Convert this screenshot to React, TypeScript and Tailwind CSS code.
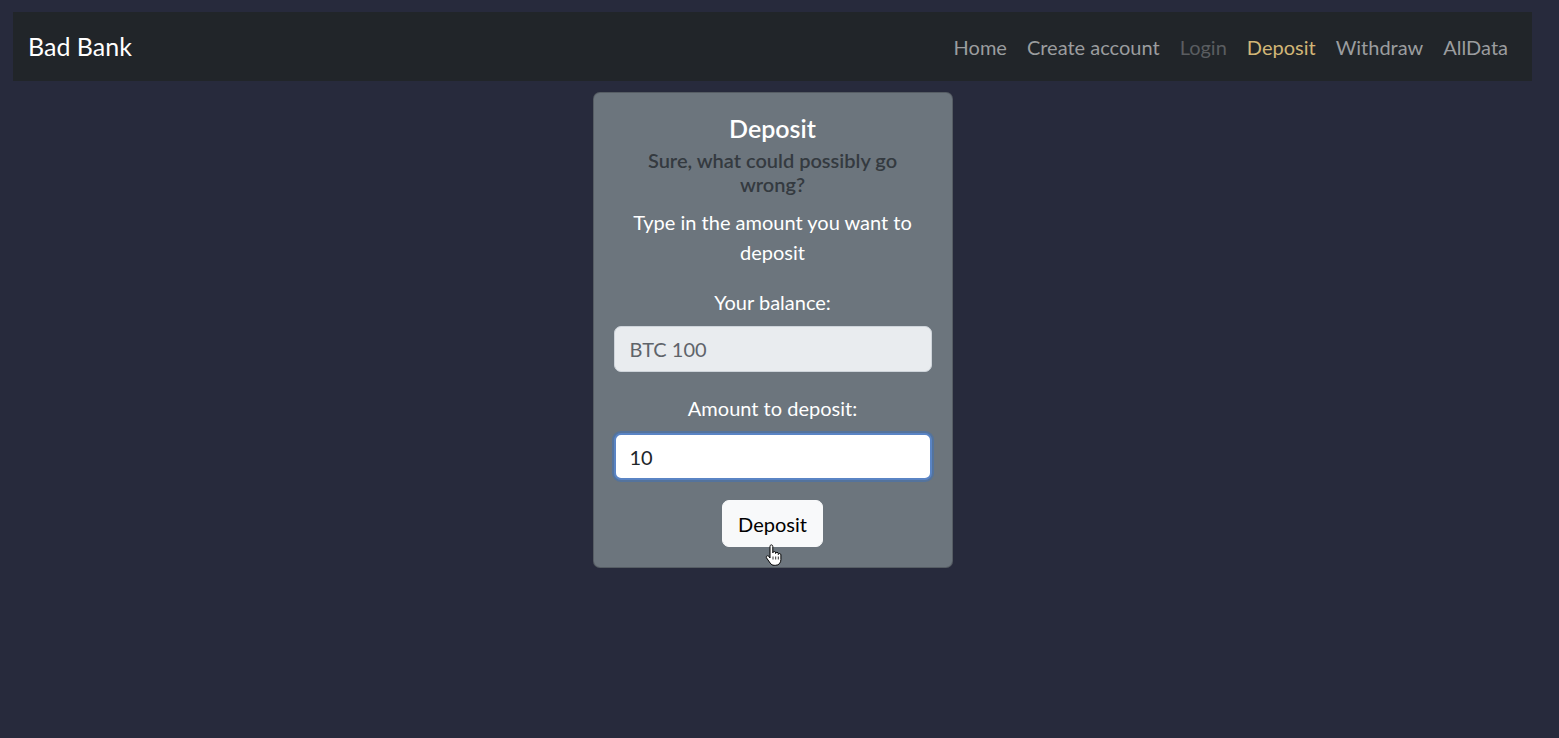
const links = [
  { label: "Home", className: "text-[#9b9d9f]" },
  { label: "Create account", className: "text-[#9b9d9f]" },
  { label: "Login", className: "text-[#5a5d60]" },
  { label: "Deposit", className: "text-[#d2b677]" },
  { label: "Withdraw", className: "text-[#9b9d9f]" },
  { label: "AllData", className: "text-[#9b9d9f]" },
];

function HandCursor() {
  return (
    <svg
      width="18"
      height="22"
      viewBox="0 0 18 22"
      className="pointer-events-none absolute left-[765px] top-[544px]"
    >
      <path
        d="M5 2.5c0-1 .6-1.6 1.4-1.6s1.4.6 1.4 1.6v6.3c.2-.9.8-1.3 1.5-1.3.8 0 1.3.6 1.3 1.4v.6c.2-.8.8-1.2 1.4-1.2.8 0 1.3.6 1.3 1.4v.8c.2-.7.7-1 1.3-1 .8 0 1.3.6 1.3 1.4v4.6c0 3.2-2 5.8-5.3 5.8H9.2c-1.8 0-3-.8-4-2.2L1.6 14c-.5-.7-.4-1.6.3-2 .6-.4 1.4-.2 1.9.4L5 14V2.5z"
        fill="#fff"
        stroke="#000"
        strokeWidth="1"
        strokeLinejoin="round"
      />
      <path d="M8 15.5v-3M10.7 15.5v-3M13.3 15.5v-3" stroke="#000" strokeWidth="0.8" />
    </svg>
  );
}

export default function App() {
  return (
    <div className="relative min-h-[738px] bg-[#272a3c] pl-[13px] pr-[27px] pt-[12px] font-['Lato','Noto_Sans',sans-serif] text-[20px] leading-[1.5]">
      <nav className="flex h-[69px] items-center justify-between bg-[#212529] pl-[15px] pr-[14px]">
        <span className="text-[25px] leading-[1.5] text-white">Bad Bank</span>
        <ul className="flex items-center">
          {links.map((link) => (
            <li key={link.label} className={`px-[10px] ${link.className}`}>
              {link.label}
            </li>
          ))}
        </ul>
      </nav>

      <div className="flex justify-center pt-[11px]">
        <div className="w-[360px] rounded-[7px] border border-black/20 bg-[#6c757d] px-[20px] pb-[20px] pt-[20px] text-center text-white">
          <h5 className="mb-[10px] text-[25px] font-semibold leading-[1.2]">Deposit</h5>
          <h6 className="mt-[-5px] mb-[11px] text-[20px] font-semibold leading-[1.2] text-[#343a40]">
            Sure, what could possibly go wrong?
          </h6>
          <p className="px-[8px]">Type in the amount you want to deposit</p>
          <p className="mt-[20px]">Your balance:</p>
          <input
            readOnly
            value="BTC 100"
            className="mt-[9px] block h-[46px] w-full rounded-[7px] border border-[#ced4da] bg-[#e9ecef] px-[15px] text-[20px] text-[#5f646a] outline-none"
          />
          <p className="mt-[21px]">Amount to deposit:</p>
          <input
            readOnly
            value="10"
            className="mt-[10px] block h-[47px] w-full rounded-[7px] border-2 border-[#5a84c4] bg-white px-[14px] text-[20px] text-[#212529] shadow-[0_0_0_2px_rgba(13,110,253,0.25)] outline-none"
          />
          <button className="mt-[20px] rounded-[7px] border border-[#f8f9fa] bg-[#f8f9fa] px-[15px] py-[7.5px] text-[20px] leading-[1.5] text-black">
            Deposit
          </button>
        </div>
      </div>
      <HandCursor />
    </div>
  );
}
